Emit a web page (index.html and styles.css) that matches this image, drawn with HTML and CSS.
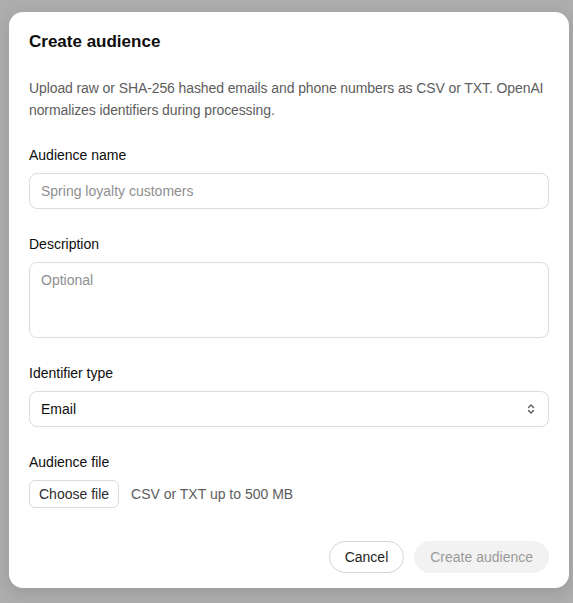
FILE: index.html
```html
<!DOCTYPE html>
<html lang="en">
<head>
<meta charset="utf-8">
<title>Create audience</title>
<link rel="stylesheet" href="styles.css">
</head>
<body>
<div class="backdrop">
  <div class="modal">
    <h2 class="title">Create audience</h2>
    <p class="intro">Upload raw or SHA-256 hashed emails and phone numbers as CSV or TXT. OpenAI normalizes identifiers during processing.</p>
    <div class="fields">
      <div class="field">
        <label class="label">Audience name</label>
        <div class="input"><span class="placeholder">Spring loyalty customers</span></div>
      </div>
      <div class="field">
        <label class="label">Description</label>
        <div class="input textarea"><span class="placeholder">Optional</span></div>
      </div>
      <div class="field">
        <label class="label">Identifier type</label>
        <div class="input select">
          <span class="value">Email</span>
          <svg class="chev" width="10" height="14" viewBox="0 0 10 14" fill="none" stroke="#5d5d5d" stroke-width="1.4" stroke-linecap="round" stroke-linejoin="round"><path d="M2.5 5.5 5 3 7.5 5.5"/><path d="M2.5 8.5 5 11 7.5 8.5"/></svg>
        </div>
      </div>
      <div class="field">
        <label class="label">Audience file</label>
        <div class="file-row">
          <span class="file-btn">Choose file</span>
          <span class="file-hint">CSV or TXT up to 500 MB</span>
        </div>
      </div>
    </div>
    <div class="footer">
      <span class="btn btn-cancel">Cancel</span>
      <span class="btn btn-primary">Create audience</span>
    </div>
  </div>
</div>
</body>
</html>
```

FILE: styles.css
```css
html, body {
  margin: 0;
  padding: 0;
  height: 100%;
}
body {
  background: #adadad;
  font-family: "Liberation Sans", Arial, sans-serif;
  color: #0d0d0d;
}
.backdrop {
  padding: 12px 4px 15px 9px;
}
.modal {
  background: #ffffff;
  border-radius: 14px;
  box-shadow: 0 4px 16px rgba(0, 0, 0, 0.12);
  padding: 18px 20px 15px 20px;
  width: 560px;
  box-sizing: border-box;
}
.title {
  margin: 0 0 23px 0;
  font-size: 17px;
  line-height: 24px;
  font-weight: 700;
  color: #0d0d0d;
}
.intro {
  margin: 0 0 24px 0;
  font-size: 14px;
  line-height: 22px;
  letter-spacing: -0.1px;
  color: #5d5d5d;
}
.fields {
  display: flex;
  flex-direction: column;
  gap: 25px;
}
.field {
  display: flex;
  flex-direction: column;
  gap: 8px;
}
.label {
  font-size: 14px;
  line-height: 20px;
  font-weight: 400;
  color: #0d0d0d;
}
.input {
  height: 36px;
  box-sizing: border-box;
  border: 1px solid #dcdcdc;
  border-radius: 8px;
  padding: 0 11px;
  display: flex;
  align-items: center;
  font-size: 14px;
}
.placeholder {
  color: #8f8f8f;
}
.textarea {
  height: 76px;
  align-items: flex-start;
  padding-top: 9px;
}
.select {
  justify-content: space-between;
  padding-right: 12px;
}
.value {
  color: #0d0d0d;
}
.file-row {
  display: flex;
  align-items: center;
  gap: 12px;
}
.file-btn {
  height: 28px;
  box-sizing: border-box;
  border: 1px solid #dcdcdc;
  border-radius: 6px;
  padding: 0 9px;
  display: flex;
  align-items: center;
  font-size: 14px;
  color: #2b2b2b;
}
.file-hint {
  font-size: 14px;
  color: #5d5d5d;
}
.footer {
  margin-top: 33px;
  display: flex;
  justify-content: flex-end;
  gap: 10px;
}
.btn {
  height: 32px;
  box-sizing: border-box;
  border-radius: 999px;
  display: flex;
  align-items: center;
  font-size: 14px;
}
.btn-cancel {
  border: 1px solid #d6d6d6;
  padding: 0 15px;
  color: #1f1f1f;
}
.btn-primary {
  background: #f2f2f2;
  padding: 0 16px;
  color: #9a9a9a;
}
```
